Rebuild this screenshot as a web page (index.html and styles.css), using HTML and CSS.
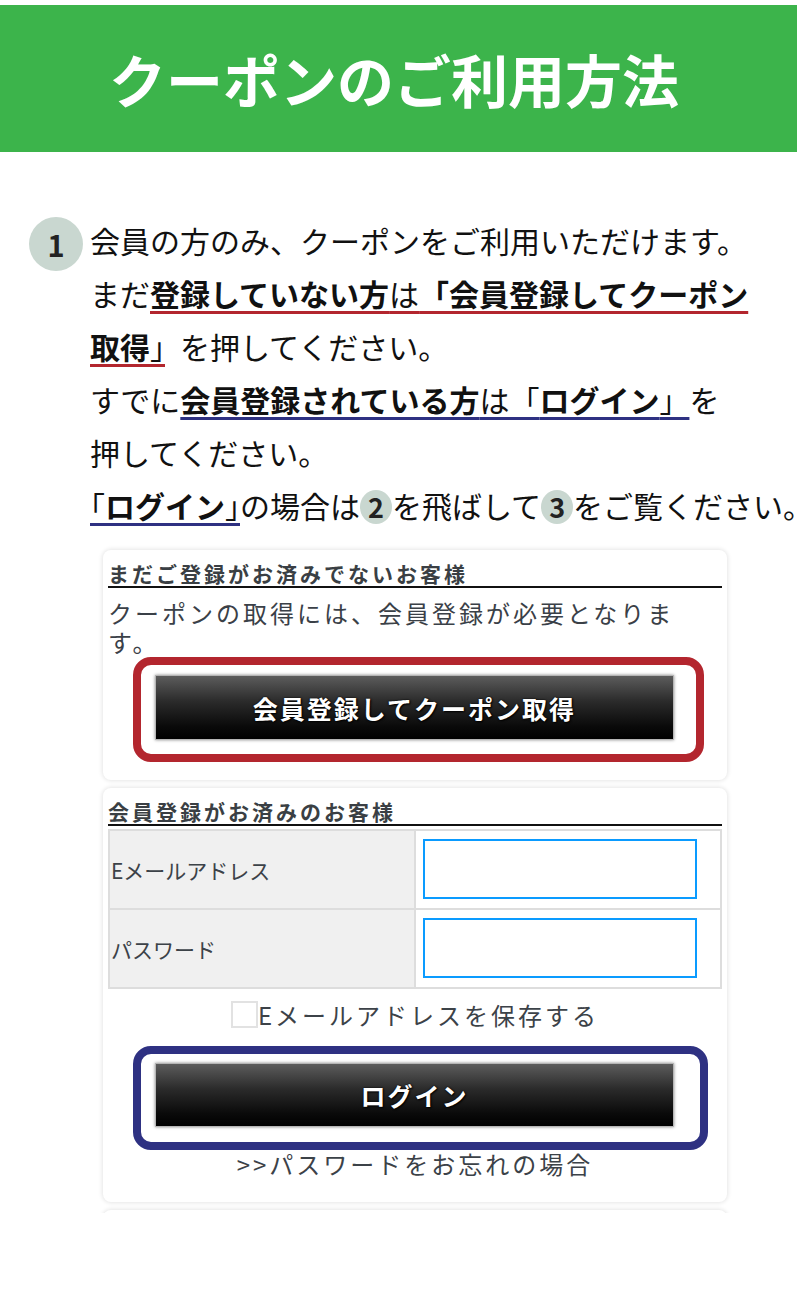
FILE: index.html
```html
<!DOCTYPE html>
<html lang="ja">
<head>
<meta charset="utf-8">
<title>クーポンのご利用方法</title>
<link rel="stylesheet" href="styles.css">
</head>
<body>
<header class="hero"><h1 class="hero-title">クーポンのご利用方法</h1></header>
<section class="step">
<span class="step-num">1</span>
<p class="step-text">会員の方のみ、クーポンをご利用いただけます。<br>まだ<span class="ul-red"><b>登録していない方</b>は<b>「会員登録してクーポン<br>取得</b><span class="half">」</span></span><span class="after-half">を押してください。</span><br>すでに<span class="ul-blue"><b>会員登録されている方</b>は「<b>ログイン</b>」</span>を<br>押してください。<br><span class="ul-blue"><span class="half">「</span><b>ログイン</b><span class="half">」</span></span>の場合は<span class="num-inline">2</span>を飛ばして<span class="num-inline">3</span>をご覧ください<span class="half">。</span></p>
</section>
<div class="panels">
<div class="card">
<h2 class="card-title">まだご登録がお済みでないお客様</h2>
<p class="card-text">クーポンの取得には、会員登録が必要となります。</p>
<div class="mark mark-red"><a class="btn">会員登録してクーポン取得</a></div>
</div>
<div class="card">
<h2 class="card-title">会員登録がお済みのお客様</h2>
<div class="login-table">
<div class="cell-label">Eメールアドレス</div>
<div class="cell-input"><input class="field" type="text"></div>
<div class="cell-label">パスワード</div>
<div class="cell-input"><input class="field" type="password"></div>
</div>
<label class="remember"><input class="check" type="checkbox">Eメールアドレスを保存する</label>
<div class="mark mark-blue"><a class="btn">ログイン</a></div>
<p class="forgot">&gt;&gt;パスワードをお忘れの場合</p>
</div>
<div class="card card-next"></div>
</div>
</body>
</html>
```
FILE: styles.css
```css
* { box-sizing: border-box; }
html, body { margin: 0; padding: 0; background: #fff; }
body {
  font-family: "Noto Sans CJK JP", "Noto Sans", sans-serif;
  color: #111;
}

.hero {
  margin-top: 5px;
  width: 797px;
  height: 147px;
  background: #3cb44b;
  display: flex;
  align-items: center;
  justify-content: center;
  padding-right: 9px;
}
.hero-title {
  margin: 0;
  color: #fff;
  font-size: 57px;
  font-weight: 700;
  line-height: 1;
  letter-spacing: 0;
}

.step {
  display: flex;
  align-items: flex-start;
  margin-top: 62px;
  padding-left: 29px;
}
.step-num {
  flex: none;
  width: 54px;
  height: 54px;
  margin-top: 3px;
  margin-right: 7px;
  border-radius: 50%;
  background: #c9d7d0;
  color: #222;
  font-weight: 700;
  font-size: 29px;
  line-height: 54px;
  text-align: center;
}
.step-text {
  margin: 0;
  font-size: 30px;
  line-height: 53px;
  white-space: nowrap;
  color: #111;
}
.step-text b { font-weight: 700; }
.ul-red, .ul-blue {
  text-decoration-line: underline;
  text-decoration-thickness: 3px;
  text-underline-offset: 5px;
  text-decoration-skip-ink: none;
}
.ul-red { text-decoration-color: #b3262e; }
.ul-blue { text-decoration-color: #2e3182; }
.half { font-feature-settings: "halt"; }
.after-half { margin-left: 15px; }
.num-inline {
  display: inline-block;
  width: 32px;
  height: 34px;
  border-radius: 50%;
  background: #c9d7d0;
  color: #222;
  font-weight: 700;
  font-size: 27px;
  line-height: 34px;
  text-align: center;
}

.panels {
  margin: 12px 0 0 97px;
  padding: 6px 6px 0;
  width: 636px;
  height: 669px;
  overflow: hidden;
}
.card {
  background: #fff;
  border-radius: 8px;
  box-shadow: 0 0 4px 1px rgba(0, 0, 0, 0.1);
  padding: 10px 5px 18px;
  margin-bottom: 8px;
  color: #3a4047;
}
.card-title {
  margin: 0;
  font-size: 21px;
  line-height: 26px;
  font-weight: 700;
  letter-spacing: 3px;
  color: #3a3f44;
  border-bottom: 2px solid #111;
}
.card-text {
  margin: 10px 0 1px;
  padding-right: 40px;
  font-size: 24px;
  line-height: 29px;
  letter-spacing: 3px;
}

.mark {
  margin-left: 25px;
  border-radius: 18px;
  border: 8px solid;
}
.mark-red {
  width: 571px;
  border-color: #b3262e;
  padding: 10px 22px 14px 14px;
}
.mark-blue {
  width: 575px;
  margin-top: 18px;
  border-color: #2e3182;
  padding: 9px 26px 15px 14px;
}
.btn {
  display: flex;
  align-items: center;
  justify-content: center;
  height: 65px;
  background: linear-gradient(to bottom, #5c5c5c 0%, #2b2b2b 40%, #0a0a0a 80%, #000 100%);
  border: 1px solid #b5b5b5;
  box-shadow: 0 0 3px rgba(0, 0, 0, 0.45);
  color: #fff;
  font-size: 25px;
  font-weight: 700;
  letter-spacing: 2px;
  text-shadow: 1px 1px 2px #000, 0 0 2px #000;
  text-decoration: none;
}
.mark-blue .btn { height: 64px; }

.login-table {
  margin-top: 3px;
  display: grid;
  grid-template-columns: 304px 304px;
  grid-auto-rows: 77px;
  gap: 2px;
  border: 2px solid #ddd;
  background: #ddd;
}
.cell-label {
  background: #f0f0f0;
  display: flex;
  align-items: center;
  padding-left: 1px;
  font-size: 21px;
  letter-spacing: 0;
  color: #3c4248;
}
.cell-input {
  background: #fff;
  padding: 8px 23px 9px 7px;
}
.field {
  display: block;
  width: 100%;
  height: 60px;
  margin: 0;
  border: 2px solid #0a9bff;
  border-radius: 0;
  background: #fff;
  outline: none;
}

.remember {
  margin-top: 12px;
  display: flex;
  align-items: center;
  justify-content: center;
  font-size: 24px;
  line-height: 27px;
  letter-spacing: 3px;
  color: #3c4248;
}
.check {
  appearance: none;
  -webkit-appearance: none;
  width: 27px;
  height: 27px;
  margin: 0;
  border: 2px solid #e2e2e2;
  background: #fff;
  flex: none;
}

.forgot {
  margin: 0;
  text-align: center;
  font-size: 24px;
  line-height: 28px;
  letter-spacing: 3px;
  color: #3c4248;
  padding-bottom: 6px;
}
.card-next { height: 40px; }
```
